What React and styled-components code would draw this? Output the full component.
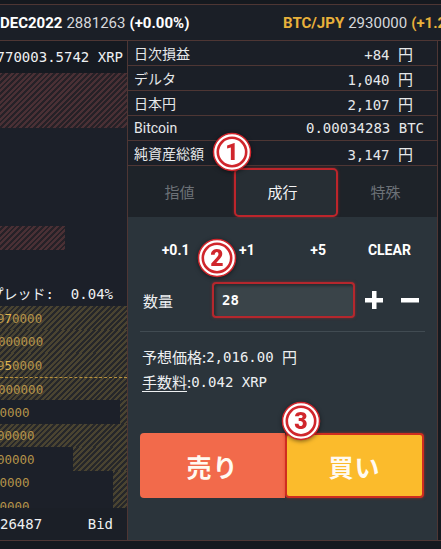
import React from 'react';
import styled, { createGlobalStyle, css } from 'styled-components';

const GlobalStyle = createGlobalStyle`
  html, body { margin: 0; padding: 0; background: #15191f; }
  body { overflow: hidden; }
  * { box-sizing: border-box; }
`;

const SANS = `Roboto, "Noto Sans CJK JP", sans-serif`;
const MONO = `"DejaVu Sans Mono", "Noto Sans CJK JP", monospace`;
const LINE = '#4e3634';
const RED_HATCH = 'repeating-linear-gradient(135deg, #4a3035 0 2px, #262127 2px 4px)';
const GOLD_HATCH = 'repeating-linear-gradient(135deg, #4a4431 0 2px, #26272a 2px 4px)';

const Screen = styled.div`
  position: relative;
  width: 441px;
  height: 549px;
  overflow: hidden;
  background: #15191f;
  display: flex;
  flex-direction: column;
  font-family: ${SANS};
  color: #eceef0;
`;

const TopStrip = styled.div`
  height: 5px;
  border-bottom: 1px solid ${LINE};
`;

const Ticker = styled.div`
  height: 36px;
  display: flex;
  align-items: center;
  white-space: nowrap;
  overflow: hidden;
  background: #1b1f27;
  border-bottom: 1px solid ${LINE};
  font-size: 15px;
`;

const Quote = styled.div`
  display: flex;
  gap: 4px;
  flex-shrink: 0;
  width: ${p => p.$width}px;
`;

const Sym = styled.span`
  font-weight: 700;
  color: ${p => (p.$gold ? '#e9b13b' : '#ffffff')};
`;

const Num = styled.span`
  color: #d6d8dc;
`;

const Main = styled.div`
  height: 500px;
  display: flex;
  border-bottom: 1px solid ${LINE};
`;

/* ---------- left order book ---------- */

const LeftCol = styled.div`
  width: 128px;
  border-right: 1px solid ${LINE};
  background: #1c2029;
  display: flex;
  flex-direction: column;
  font-family: ${MONO};
  overflow: hidden;
`;

const RightText = styled.div`
  height: ${p => p.$h}px;
  display: flex;
  align-items: center;
  justify-content: flex-end;
  padding-right: ${p => p.$pr}px;
  white-space: pre;
  font-size: 14px;
  color: #eef0f2;
  background: ${p => p.$bg || 'transparent'};
`;

const Hatch = styled.div`
  height: ${p => p.$h}px;
  width: ${p => p.$w || '100%'};
  flex-shrink: 0;
  background: ${RED_HATCH};
`;

const Spacer = styled.div`
  height: ${p => p.$h}px;
  flex-shrink: 0;
`;

const BidArea = styled.div`
  height: 202px;
  overflow: hidden;
  flex-shrink: 0;
`;

const BidRow = styled.div`
  position: relative;
  height: 23.5px;
  display: flex;
  align-items: center;
  background: ${GOLD_HATCH};
  ${p => p.$dashed && css`
    border-top: 1.5px dashed #b8923e;
  `}
`;

const Cover = styled.div`
  position: absolute;
  left: 0;
  top: 0;
  bottom: 0;
  background: #1c2029;
`;

const Price = styled.span`
  position: relative;
  font-size: 12.5px;
  margin-left: ${p => p.$shift}px;
  color: #b5934a;
  white-space: nowrap;
`;

const Hi = styled.span`
  color: #e2b650;
`;

const BookFooter = styled.div`
  height: 32px;
  display: flex;
  align-items: center;
  justify-content: space-between;
  padding-right: 14px;
  font-size: 14px;
  color: #eef0f2;
  background: #1b1f27;
`;

/* ---------- right trade panel ---------- */

const RightCol = styled.div`
  width: 310px;
  border-right: 1px solid ${LINE};
  display: flex;
  flex-direction: column;
  background: #1b1f27;
`;

const InfoRow = styled.div`
  height: 25px;
  display: flex;
  align-items: center;
  justify-content: space-between;
  padding: 0 ${p => p.$pad}px 0 6px;
  border-bottom: 1px solid ${LINE};
  font-size: 14px;
`;

const InfoLabel = styled.span`
  color: #e6e8ea;
`;

const InfoValue = styled.span`
  font-family: ${MONO};
  color: #e6e8ea;
  white-space: pre;
`;

const Unit = styled.span`
  font-family: "Noto Sans CJK JP", sans-serif;
  font-size: 15px;
`;

const Tabs = styled.div`
  height: 51px;
  display: flex;
  background: #1e2329;
`;

const Tab = styled.div`
  position: relative;
  flex: 1;
  display: flex;
  align-items: center;
  justify-content: center;
  font-size: 15px;
  color: ${p => (p.$active ? '#f2f3f4' : '#6c7177')};
  ${p => p.$active && css`
    &::before {
      content: '';
      position: absolute;
      inset: 2px -4px 0 3px;
      background: #272e34;
      border: 2px solid #bd252b;
      border-radius: 5px;
      box-shadow: 0 0 3px rgba(220, 40, 40, 0.5);
    }
  `}
`;

const TabText = styled.span`
  position: relative;
`;

const OrderPanel = styled.div`
  flex: 1;
  background: #2b343b;
  padding: 0 12px;
  display: flex;
  flex-direction: column;
`;

const QuickRow = styled.div`
  height: 65px;
  display: grid;
  grid-template-columns: repeat(4, 1fr);
  align-items: center;
  justify-items: center;
  font-weight: 700;
  font-size: 14px;
  color: #ffffff;
`;

const QtyRow = styled.div`
  height: 36px;
  display: flex;
  align-items: center;
`;

const QtyLabel = styled.span`
  width: 72px;
  padding-left: 3px;
  font-size: 15px;
  color: #eef0f2;
`;

const QtyInput = styled.div`
  width: 143px;
  height: 36px;
  display: flex;
  align-items: center;
  padding-left: 8px;
  background: #3a4449;
  border: 2px solid #b5272d;
  border-radius: 4px;
  box-shadow: inset 2px 2px 3px rgba(0, 0, 0, 0.35), 0 0 3px rgba(200, 40, 40, 0.5);
  font-family: ${MONO};
  font-weight: 700;
  font-size: 14px;
  color: #ffffff;
`;

const StepBtns = styled.div`
  display: flex;
  gap: 10px;
  margin-left: 6px;
`;

const StepBtn = styled.div`
  width: 26px;
  height: 26px;
  display: flex;
  align-items: center;
  justify-content: center;
`;

const Divider = styled.div`
  height: 1px;
  margin-top: 13px;
  background: #414b52;
`;

const Estimates = styled.div`
  padding-top: 12px;
  padding-left: 2px;
  font-size: 14px;
  color: #eef0f2;
`;

const EstLine = styled.div`
  height: 25px;
  display: flex;
  align-items: center;
  white-space: pre;
`;

const EstLabel = styled.span`
  font-family: "Noto Sans CJK JP", sans-serif;
  font-size: 15px;
  text-decoration: ${p => (p.$underline ? 'underline' : 'none')};
  text-underline-offset: 3px;
`;

const EstValue = styled.span`
  font-family: ${MONO};
`;

const TradeButtons = styled.div`
  margin-top: 39px;
  height: 65px;
  display: flex;
  margin-right: 1px;
`;

const TradeBtn = styled.div`
  display: flex;
  align-items: center;
  justify-content: center;
  font-family: "Noto Sans CJK JP", sans-serif;
  font-weight: 700;
  font-size: 25px;
  letter-spacing: 1px;
  color: #fffaf2;
  ${p => p.$side === 'sell' ? css`
    width: 145px;
    background: #f26a4b;
    border-radius: 4px 0 0 4px;
  ` : css`
    flex: 1;
    background: #fbbb2c;
    border: 2px solid #cf2d1f;
    border-radius: 4px;
    box-shadow: 0 0 3px rgba(210, 50, 30, 0.6);
  `}
`;

const Marker = styled.svg`
  position: absolute;
  left: ${p => p.$x - 20}px;
  top: ${p => p.$y - 20}px;
  filter: drop-shadow(0 1px 2px rgba(0, 0, 0, 0.5));
`;

const Badge = ({ n, x, y }) => (
  <Marker $x={x} $y={y} width="40" height="40" viewBox="0 0 40 40">
    <circle cx="20" cy="20" r="18.5" fill="#ffffff" stroke="#d0262c" strokeWidth="1.5" />
    <circle cx="20" cy="20" r="14.2" fill="#ffffff" stroke="#d0262c" strokeWidth="2.6" />
    <text x="20" y="28.2" textAnchor="middle" fontSize="23" fontWeight="900"
      fontFamily="Roboto, sans-serif" fill="#d0262c">{n}</text>
  </Marker>
);

const info = [
  { label: '日次損益', value: '+84 ', unit: '円', pad: 24 },
  { label: 'デルタ', value: '1,040 ', unit: '円', pad: 24 },
  { label: '日本円', value: '2,107 ', unit: '円', pad: 24 },
  { label: 'Bitcoin', value: '0.00034283 BTC', pad: 13 },
  { label: '純資産総額', value: '3,147 ', unit: '円', pad: 24 },
];

const bids = [
  { lo: '9', hi: '7', rest: '0000', shift: -3, cover: 0 },
  { lo: '000000', shift: -2, cover: 0 },
  { lo: '9', hi: '5', rest: '0000', shift: -3, cover: 0 },
  { lo: '000000', shift: -2, cover: 0, dashed: true },
  { lo: '00000', shift: -8, cover: 120 },
  { lo: '00000', shift: -3, cover: 0 },
  { lo: '00000', shift: -3, cover: 73 },
  { lo: '00000', shift: -8, cover: 113 },
  { lo: '00000', shift: -8, cover: 113 },
];

const PlusIcon = () => (
  <svg width="20" height="20" viewBox="0 0 20 20">
    <rect x="8" y="1" width="4.5" height="18" fill="#ffffff" />
    <rect x="1" y="8" width="18" height="4.5" fill="#ffffff" />
  </svg>
);

const MinusIcon = () => (
  <svg width="20" height="20" viewBox="0 0 20 20">
    <rect x="1" y="8" width="18" height="4.5" fill="#ffffff" />
  </svg>
);

export default function App() {
  return (
    <Screen>
      <GlobalStyle />
      <TopStrip />
      <Ticker>
        <Quote $width={283}>
          <Sym>DEC2022</Sym>
          <Num>2881263</Num>
          <Sym>(+0.00%)</Sym>
        </Quote>
        <Quote $width={200}>
          <Sym $gold>BTC/JPY</Sym>
          <Num>2930000</Num>
          <Sym $gold>(+1.22%)</Sym>
        </Quote>
      </Ticker>

      <Main>
        <LeftCol>
          <RightText $h={32} $pr={4} $bg="#161a21">
            <span>1770003.5742 XRP</span>
          </RightText>
          <Hatch $h={55} />
          <Spacer $h={98} />
          <Hatch $h={24} $w="65px" />
          <Spacer $h={30} />
          <RightText $h={27} $pr={14}>
            <span>スプレッド:  0.04%</span>
          </RightText>
          <BidArea>
            {bids.map((b, i) => (
              <BidRow key={i} $dashed={b.dashed}>
                {b.cover > 0 && <Cover style={{ width: b.cover }} />}
                <Price $shift={b.shift}>
                  {b.lo}
                  {b.hi && <Hi>{b.hi}</Hi>}
                  {b.rest}
                </Price>
              </BidRow>
            ))}
          </BidArea>
          <BookFooter>
            <span>26487</span>
            <span>Bid</span>
          </BookFooter>
        </LeftCol>

        <RightCol>
          {info.map(r => (
            <InfoRow key={r.label} $pad={r.pad}>
              <InfoLabel>{r.label}</InfoLabel>
              <InfoValue>
                {r.value}
                {r.unit && <Unit>{r.unit}</Unit>}
              </InfoValue>
            </InfoRow>
          ))}
          <Tabs>
            <Tab><TabText>指値</TabText></Tab>
            <Tab $active><TabText>成行</TabText></Tab>
            <Tab><TabText>特殊</TabText></Tab>
          </Tabs>
          <OrderPanel>
            <QuickRow>
              <span>+0.1</span>
              <span>+1</span>
              <span>+5</span>
              <span>CLEAR</span>
            </QuickRow>
            <QtyRow>
              <QtyLabel>数量</QtyLabel>
              <QtyInput>28</QtyInput>
              <StepBtns>
                <StepBtn><PlusIcon /></StepBtn>
                <StepBtn><MinusIcon /></StepBtn>
              </StepBtns>
            </QtyRow>
            <Divider />
            <Estimates>
              <EstLine>
                <EstLabel>予想価格:</EstLabel>
                <EstValue>2,016.00 </EstValue>
                <EstLabel>円</EstLabel>
              </EstLine>
              <EstLine>
                <EstLabel $underline>手数料</EstLabel>
                <EstLabel>:</EstLabel>
                <EstValue>0.042 XRP</EstValue>
              </EstLine>
            </Estimates>
            <TradeButtons>
              <TradeBtn $side="sell">売り</TradeBtn>
              <TradeBtn $side="buy">買い</TradeBtn>
            </TradeButtons>
          </OrderPanel>
        </RightCol>
      </Main>

      <Badge n="1" x={232} y={152} />
      <Badge n="2" x={217} y={258} />
      <Badge n="3" x={301} y={421} />
    </Screen>
  );
}
